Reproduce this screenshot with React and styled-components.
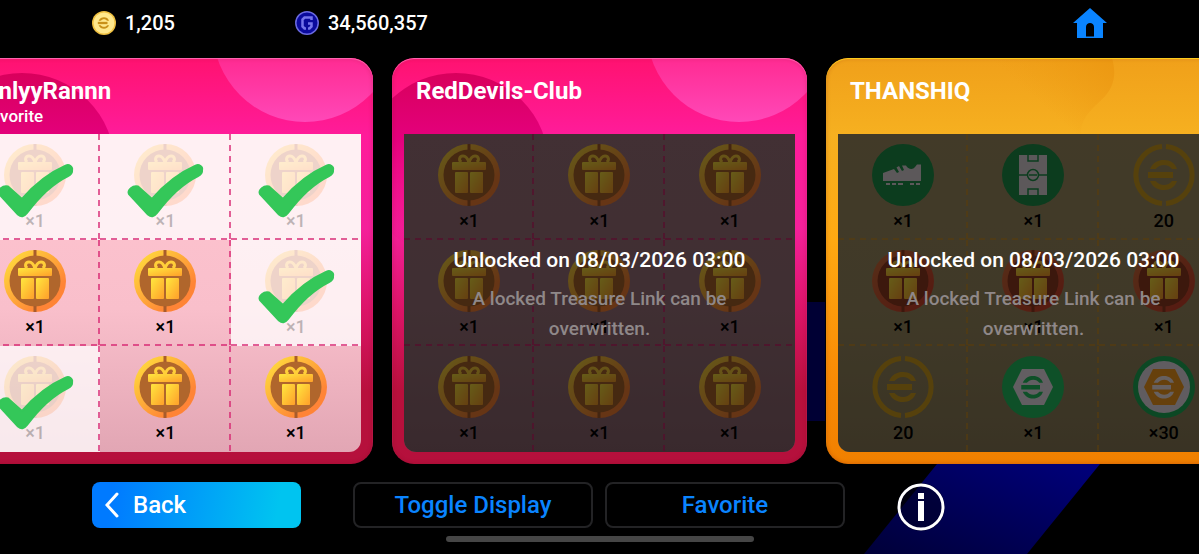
import styled, { createGlobalStyle } from "styled-components";

const gift = { icon: "gift", label: "×1" };
const giftDone = { icon: "gift", label: "×1", done: true };
const redGift = { icon: "redGift", label: "×1" };

const links = [
  {
    name: "OnlyyRannn",
    note: "Favorite",
    theme: "pink",
    rewards: [giftDone, giftDone, giftDone, gift, gift, giftDone, giftDone, gift, gift],
  },
  {
    name: "RedDevils-Club",
    theme: "pink",
    unlock: "Unlocked on 08/03/2026 03:00",
    rewards: [gift, gift, gift, gift, gift, gift, gift, gift, gift],
  },
  {
    name: "THANSHIQ",
    theme: "gold",
    unlock: "Unlocked on 08/03/2026 03:00",
    rewards: [
      { icon: "boot", label: "×1" },
      { icon: "pitch", label: "×1" },
      { icon: "coin", label: "20" },
      redGift,
      redGift,
      redGift,
      { icon: "coin", label: "20" },
      { icon: "hex", label: "×1" },
      { icon: "hexRing", label: "×30" },
    ],
  },
];

const themes = {
  pink: {
    frame:
      "linear-gradient(180deg, #ff1270 0%, #ff1c9a 19%, #f4209a 42%, #dc1468 62%, #b8103c 82%, #b5103c 100%)",
    edge: "#ff6cb4",
    board: "linear-gradient(180deg, #ffc4d0 0%, #f9bfcb 55%, #e2a6b4 100%)",
    lockedBoard: "linear-gradient(180deg, #a57882 0%, #a0767f 55%, #906872 100%)",
    line: "rgba(214, 32, 110, 0.7)",
  },
  gold: {
    frame: "linear-gradient(180deg, #f0a01a 0%, #f6b020 19%, #ffa912 45%, #f98a04 80%, #f08000 100%)",
    edge: "#ffd21e",
    lockedBoard: "linear-gradient(180deg, #a59264 0%, #a09064 55%, #90805a 100%)",
    line: "rgba(220, 150, 30, 0.6)",
  },
};

const Gradients = () => (
  <HiddenSvg aria-hidden="true">
    <defs>
      <linearGradient id="ring" x1="0" y1="0" x2="1" y2="1">
        <stop offset="0.15" stopColor="#ffd23c" />
        <stop offset="0.75" stopColor="#ff8436" />
      </linearGradient>
      <linearGradient id="redRing" x1="0" y1="0" x2="1" y2="1">
        <stop offset="0.1" stopColor="#d8703c" />
        <stop offset="0.8" stopColor="#d8482e" />
      </linearGradient>
      <linearGradient id="box" x1="0" y1="0" x2="1" y2="1">
        <stop offset="0.1" stopColor="#ffe03c" />
        <stop offset="0.9" stopColor="#ffa62c" />
      </linearGradient>
      <linearGradient id="bubble" x1="0" y1="0" x2="0" y2="1">
        <stop offset="0.45" stopColor="#ff1a7c" />
        <stop offset="1" stopColor="#ff48b8" />
      </linearGradient>
      <linearGradient id="shade" x1="0" y1="0" x2="0" y2="1">
        <stop offset="0" stopColor="#d8005c" />
        <stop offset="0.35" stopColor="#e4007c" />
        <stop offset="1" stopColor="#f0108c" stopOpacity="0" />
      </linearGradient>
      <linearGradient id="wave" x1="0" y1="0.3" x2="1" y2="0">
        <stop offset="0.6" stopColor="#ee9c14" stopOpacity="0" />
        <stop offset="1" stopColor="#ec9812" />
      </linearGradient>
      <linearGradient id="beam" x1="0" y1="1" x2="1" y2="0">
        <stop offset="0" stopColor="#000038" />
        <stop offset="1" stopColor="#00007c" />
      </linearGradient>
    </defs>
  </HiddenSvg>
);

const EuroMark = ({ color }) => (
  <g fill={color}>
    <path d="M17 25C20 18.500 25 16 31 16S42 19 44 25H39C37 22.500 34.500 21 31 21S25 22.500 22.500 25Z" />
    <rect x="15" y="28" width="25" height="6" />
    <path d="M17 37C20 43.500 25 46 31 46S42 43 44 37H39C37 39.500 34.500 41 31 41S25 39.500 22.500 37Z" />
  </g>
);

const Gift = ({ red }) => (
  <>
    <circle cx="31" cy="31" r="31" fill={red ? "url(#redRing)" : "url(#ring)"} />
    <circle cx="31" cy="31" r="25.500" fill={red ? "#963c22" : "#b0662c"} />
    <path d="M31 0V6M31 56V62" stroke={red ? "#963c22" : "#a85c2c"} strokeWidth="3" />
    <g fill="url(#box)">
      <rect x="14" y="18" width="34" height="8" rx="1" />
      <rect x="17" y="28" width="13" height="21" rx="1" />
      <rect x="32" y="28" width="13" height="21" rx="1" />
    </g>
    <path
      d="M31 18.500C29.500 14 27.500 12 25 12C21 12 20.500 17 23.500 18M31 18.500C32.500 14 34.500 12 37 12C41 12 41.500 17 38.500 18"
      fill="none"
      stroke="#ffcf3a"
      strokeWidth="3"
    />
  </>
);

const Hexagon = ({ fill, mark }) => (
  <>
    <path d="M20 13H42L51 31L42 49H20L11 31Z" fill={fill} />
    <g transform="translate(8 8) scale(0.75)">
      <EuroMark color={mark} />
    </g>
  </>
);

const drawings = {
  gift: <Gift />,
  redGift: <Gift red />,
  boot: (
    <>
      <circle cx="31" cy="31" r="31" fill="#1e964c" />
      <path
        d="M11 29L22 25L25 29L27 28L24.500 23.500L27 22L30 27L32 26L30 21.500H34C36 25.500 41 26 43 23L45 20.500H49V37H11Z"
        fill="#e6dce1"
      />
      <path d="M14 40H18M20 40H24M26 40H31M38 40H42M44 40H48" stroke="#e6dce1" strokeWidth="2" />
    </>
  ),
  pitch: (
    <>
      <circle cx="31" cy="31" r="31" fill="#1e964c" />
      <rect x="17" y="11" width="28" height="40" fill="#e6dce1" />
      <g fill="none" stroke="#1e964c" strokeWidth="1.500">
        <path d="M17 31H26M36 31H45M26 11V17H36V11M26 51V45H36V51" />
        <circle cx="31" cy="31" r="5.500" />
        <path d="M27 31H35" />
      </g>
    </>
  ),
  coin: (
    <>
      <path
        d="M29 2.600A28.500 28.500 0 0 0 29 59.400M33 2.600A28.500 28.500 0 0 1 33 59.400"
        fill="none"
        stroke="#d8a41e"
        strokeWidth="5"
      />
      <EuroMark color="#d8a41e" />
    </>
  ),
  hex: (
    <>
      <circle cx="31" cy="31" r="31" fill="#24c864" />
      <Hexagon fill="#f4ecf4" mark="#24c864" />
    </>
  ),
  hexRing: (
    <>
      <circle cx="31" cy="31" r="31" fill="#20b45a" />
      <circle cx="31" cy="31" r="26" fill="#f0e6f0" />
      <Hexagon fill="#ffa01e" mark="#fff0f0" />
    </>
  ),
};

const PinkArt = () => (
  <CardArt viewBox="0 0 415 406" preserveAspectRatio="none" aria-hidden="true">
    <circle cx="64" cy="108" r="93" fill="url(#shade)" />
    <circle cx="347" cy="-28" r="92" fill="url(#bubble)" />
  </CardArt>
);

const GoldArt = () => (
  <CardArt viewBox="0 0 415 406" preserveAspectRatio="none" aria-hidden="true">
    <path d="M0 0H286C290 14 289 26 280 37C270 49 255 56 255 76H0Z" fill="url(#wave)" />
  </CardArt>
);

const Reward = ({ icon, label, done, line }) => (
  <Cell $done={done} $line={line}>
    <RewardIcon $done={done} viewBox="0 0 62 62" aria-hidden="true">
      {drawings[icon]}
    </RewardIcon>
    <Amount $done={done}>{label}</Amount>
    {done && (
      <Tick viewBox="28 30 74 53" aria-label="Claimed">
        <path
          d="M29 60C27 56 33 51 38 52.500L52 65C64 51 79 39 96 31.500C99 30 103 33 102 36C102.500 39 101 40.500 98 42C80 51 68 64 57 79C54 83 51 83 48 80.500Z"
          fill="#34c759"
          stroke="#34c759"
          strokeWidth="2"
          strokeLinejoin="round"
        />
      </Tick>
    )}
  </Cell>
);

const TreasureLink = ({ name, note, theme, unlock, rewards }) => (
  <Card $theme={themes[theme]}>
    {theme === "pink" ? <PinkArt /> : <GoldArt />}
    <CardHeader>
      <CardTitle>{name}</CardTitle>
      {note && <CardNote>{note}</CardNote>}
    </CardHeader>
    <Board $fill={unlock ? themes[theme].lockedBoard : themes[theme].board}>
      <Rewards>
        {rewards.map((reward, i) => (
          <Reward key={i} {...reward} line={themes[theme].line} />
        ))}
      </Rewards>
      {unlock && (
        <Lock>
          <LockTitle>{unlock}</LockTitle>
          <LockText>A locked Treasure Link can be overwritten.</LockText>
        </Lock>
      )}
    </Board>
  </Card>
);

const App = () => {
  return (
    <Page>
      <GlobalStyle />
      <Gradients />
      <Backdrop viewBox="0 0 1199 554" preserveAspectRatio="none" aria-hidden="true">
        <path d="M806 302H825V421H806Z" fill="#000034" />
        <path d="M937 464H1100L1027 554H864Z" fill="url(#beam)" />
      </Backdrop>
      <TopBar>
        <Currency>
          <CurrencyIcon viewBox="0 0 62 62" aria-hidden="true">
            <circle cx="31" cy="31" r="31" fill="#f0c040" />
            <circle cx="31" cy="31" r="27" fill="#ffe88c" />
            <EuroMark color="#c89018" />
          </CurrencyIcon>
          1,205
        </Currency>
        <Currency>
          <CurrencyIcon viewBox="0 0 24 24" aria-hidden="true">
            <circle cx="12" cy="12" r="11.200" fill="#0a0a9c" stroke="#6a6ae0" strokeWidth="1.500" />
            <path
              d="M16.500 9V6.500H9.500L7.500 8.500V15.500L9.500 17.500H11M13 17.500H14.500L16.500 15.500V12.500H13"
              fill="none"
              stroke="#7474ea"
              strokeWidth="2.500"
            />
          </CurrencyIcon>
          34,560,357
        </Currency>
        <HomeLink href="#home" aria-label="Home">
          <svg width="34" height="30" viewBox="0 0 34 30" aria-hidden="true">
            <path
              d="M17 0L34 15H30V30H4V15H0ZM13 28.500H21V19C21 13.500 13 13.500 13 19Z"
              fill="#0a84ff"
              fillRule="evenodd"
            />
          </svg>
        </HomeLink>
      </TopBar>
      <Carousel>
        {links.map((link) => (
          <TreasureLink key={link.name} {...link} />
        ))}
      </Carousel>
      <Footer>
        <BackButton type="button">
          <svg width="14" height="26" viewBox="0 0 14 26" aria-hidden="true">
            <path d="M12 2L2 13L12 24" fill="none" stroke="#fff" strokeWidth="3" strokeLinecap="round" />
          </svg>
          Back
        </BackButton>
        <Actions>
          <OutlineButton type="button">Toggle Display</OutlineButton>
          <OutlineButton type="button">Favorite</OutlineButton>
        </Actions>
        <InfoButton type="button" aria-label="Information">
          <svg width="48" height="48" viewBox="0 0 48 48" aria-hidden="true">
            <circle cx="24" cy="24" r="22" fill="none" stroke="#fff" strokeWidth="3" />
            <path d="M21 10H27V16H21ZM21 18H27V38H21Z" fill="#fff" />
          </svg>
        </InfoButton>
      </Footer>
      <HomeIndicator />
    </Page>
  );
};

const GlobalStyle = createGlobalStyle`
  * {
    box-sizing: border-box;
  }

  body {
    margin: 0;
    background: #000;
  }

  h2, p, ul {
    margin: 0;
    padding: 0;
  }

  button {
    font: inherit;
    cursor: pointer;
  }
`;

const Page = styled.main`
  position: relative;
  display: flex;
  flex-direction: column;
  min-height: 100vh;
  overflow: hidden;
  background: #000;
  color: #fff;
  font-family: Roboto, "Liberation Sans", sans-serif;
  font-weight: 500;
`;

const HiddenSvg = styled.svg`
  position: absolute;
  width: 0;
  height: 0;
`;

const Backdrop = styled.svg`
  position: absolute;
  inset: 0;
  width: 100%;
  height: 100%;
`;

const TopBar = styled.header`
  display: flex;
  align-items: center;
  height: 46px;
  padding: 0 92px;
`;

const Currency = styled.div`
  display: flex;
  align-items: center;
  gap: 9px;
  min-width: 203px;
  font-size: 20px;
  line-height: 24px;
`;

const CurrencyIcon = styled.svg`
  width: 24px;
  height: 24px;
`;

const HomeLink = styled.a`
  display: flex;
  margin-left: auto;
`;

const Carousel = styled.div`
  display: flex;
  justify-content: center;
  gap: 19px;
  margin-top: 12px;
`;

const Card = styled.article`
  position: relative;
  flex: 0 0 415px;
  padding: 0 12px 12px;
  overflow: hidden;
  border-radius: 22px;
  background: ${({ $theme }) => $theme.frame};

  &::after {
    content: "";
    position: absolute;
    inset: 0;
    border-radius: 22px;
    box-shadow: inset 0 1px 1px ${({ $theme }) => $theme.edge}, inset 0 0 4px rgba(120, 0, 30, 0.3);
    pointer-events: none;
  }
`;

const CardArt = styled.svg`
  position: absolute;
  inset: 0;
  width: 100%;
  height: 100%;
`;

const CardHeader = styled.header`
  position: relative;
  min-height: 76px;
  padding: 18px 12px 0;
`;

const CardTitle = styled.h2`
  font-size: 24px;
  font-weight: 700;
  line-height: 30px;
`;

const CardNote = styled.p`
  font-size: 17px;
  line-height: 20px;
`;

const Board = styled.div`
  position: relative;
  overflow: hidden;
  border-radius: 0 0 12px 12px;
  background: ${({ $fill }) => $fill};
`;

const Rewards = styled.ul`
  display: grid;
  grid-template-columns: repeat(3, 1fr);
  list-style: none;
`;

const Cell = styled.li`
  position: relative;
  display: flex;
  flex-direction: column;
  align-items: center;
  gap: 4px;
  height: 106px;
  padding-top: 10px;
  color: #000;
  background-color: ${({ $done }) => ($done ? "rgba(255, 255, 255, 0.75)" : "transparent")};

  &:not(:nth-child(3n))::before {
    content: "";
    position: absolute;
    top: 0;
    right: 0;
    bottom: 0;
    width: 2px;
    background: repeating-linear-gradient(${({ $line }) => $line} 0 6px, transparent 6px 11px);
  }

  &:nth-child(-n + 6)::after {
    content: "";
    position: absolute;
    right: 0;
    bottom: 0;
    left: 0;
    height: 2px;
    background: repeating-linear-gradient(90deg, ${({ $line }) => $line} 0 6px, transparent 6px 11px);
  }
`;

const RewardIcon = styled.svg`
  width: 62px;
  height: 62px;
  opacity: ${({ $done }) => ($done ? 0.2 : 1)};
`;

const Amount = styled.p`
  font-size: 18px;
  line-height: 22px;
  opacity: ${({ $done }) => ($done ? 0.25 : 1)};
`;

const Tick = styled.svg`
  position: absolute;
  top: 30px;
  left: 50%;
  width: 74px;
  height: 53px;
  overflow: visible;
  transform: translateX(-50%);
`;

const Lock = styled.div`
  position: absolute;
  inset: 0;
  display: flex;
  flex-direction: column;
  align-items: center;
  gap: 12px;
  padding: 114px 40px 0;
  background: rgba(0, 0, 0, 0.6);
  text-align: center;
`;

const LockTitle = styled.p`
  font-size: 21px;
  line-height: 24px;
`;

const LockText = styled.p`
  color: #8f8889;
  font-size: 19px;
  line-height: 30px;
`;

const Footer = styled.footer`
  position: relative;
  display: flex;
  align-items: center;
  gap: 52px;
  margin-top: 18px;
  padding: 0 92px;
  font-size: 24px;
`;

const BackButton = styled.button`
  display: flex;
  align-items: center;
  gap: 14px;
  flex: 0 1 209px;
  height: 46px;
  padding: 0 13px;
  border: 0;
  border-radius: 8px;
  background: linear-gradient(100deg, #007aff 10%, #00c4f0 88%);
  color: #fff;
`;

const Actions = styled.div`
  display: flex;
  gap: 12px;
  flex: 0 1 492px;
`;

const OutlineButton = styled.button`
  flex: 1;
  height: 46px;
  padding: 0;
  border: 2px solid #232325;
  border-radius: 8px;
  background: #000;
  color: #0a84ff;
`;

const InfoButton = styled.button`
  display: flex;
  margin: 0 0 -4px;
  padding: 0;
  border: 0;
  border-radius: 50%;
  background: rgba(0, 0, 30, 0.5);
`;

const HomeIndicator = styled.div`
  align-self: center;
  width: 308px;
  height: 6px;
  margin-top: 8px;
  border-radius: 3px;
  background: #464646;
`;

export default App;
